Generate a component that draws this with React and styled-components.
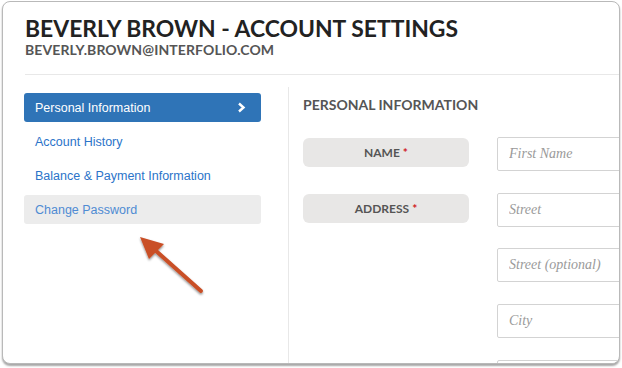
import React from 'react';
import styled, { createGlobalStyle } from 'styled-components';

const GlobalStyle = createGlobalStyle`
  html, body {
    margin: 0;
    padding: 0;
    background: #ffffff;
  }
  body {
    width: 622px;
    height: 368px;
    overflow: hidden;
    font-family: "Liberation Sans", Arial, sans-serif;
  }
`;

const navItems = [
  { label: 'Personal Information', state: 'active' },
  { label: 'Account History' },
  { label: 'Balance & Payment Information' },
  { label: 'Change Password', state: 'hover' },
];

const fields = [
  { label: 'NAME', placeholder: 'First Name' },
  { label: 'ADDRESS', placeholder: 'Street' },
  { placeholder: 'Street (optional)' },
  { placeholder: 'City' },
  { placeholder: 'State' },
];

const App = () => {
  return (
    <>
      <GlobalStyle />
      <Window>
        <Header>
          <Title>BEVERLY BROWN - ACCOUNT SETTINGS</Title>
          <Email>BEVERLY.BROWN@INTERFOLIO.COM</Email>
        </Header>
        <Body>
          <Sidebar>
            {navItems.map((item) => (
              <NavItem key={item.label} $state={item.state}>
                {item.label}
                {item.state === 'active' && (
                  <svg width="9" height="11" viewBox="0 0 9 11">
                    <path d="M2 1.5 L6.5 5.5 L2 9.5" fill="none" stroke="#fff" strokeWidth="2.4" />
                  </svg>
                )}
              </NavItem>
            ))}
          </Sidebar>
          <Main>
            <SectionTitle>PERSONAL INFORMATION</SectionTitle>
            <Form>
              {fields.map((f) => (
                <Row key={f.placeholder}>
                  {f.label ? (
                    <Label>
                      {f.label}<Req>*</Req>
                    </Label>
                  ) : (
                    <span />
                  )}
                  <Input placeholder={f.placeholder} />
                </Row>
              ))}
            </Form>
          </Main>
        </Body>
        <Pointer width="80" height="70" viewBox="0 0 80 70">
          <defs>
            <filter id="sh" x="-20%" y="-20%" width="140%" height="140%">
              <feDropShadow dx="0" dy="1.5" stdDeviation="1.2" floodColor="#000" floodOpacity="0.45" />
            </filter>
          </defs>
          <g filter="url(#sh)">
            <line x1="68" y1="61" x2="22" y2="20" stroke="#c94f27" strokeWidth="4" strokeLinecap="round" />
            <path d="M7 7 L31 14 L16 29 Z" fill="#c94f27" />
          </g>
        </Pointer>
      </Window>
    </>
  );
};

const Window = styled.div`
  position: relative;
  margin: 1px 2px 0 2px;
  height: 363px;
  box-sizing: border-box;
  border: 1px solid #b9b9b9;
  border-radius: 8px;
  overflow: hidden;
  background: #fff;
  box-shadow: 0 2px 2px rgba(0, 0, 0, 0.35);
`;

const Header = styled.div`
  margin-left: 22px;
  padding-top: 12px;
  height: 60px;
  border-bottom: 1px solid #e8e8e8;
`;

const Title = styled.h1`
  margin: 0;
  font-family: Lato, "Open Sans", sans-serif;
  font-weight: 700;
  font-size: 22.9px;
  line-height: 28px;
  color: #222;
`;

const Email = styled.div`
  font-family: Lato, "Open Sans", sans-serif;
  font-weight: 700;
  font-size: 14px;
  line-height: 16px;
  color: #555;
  letter-spacing: 0.1px;
`;

const Body = styled.div`
  display: flex;
  padding-left: 21px;
  height: 300px;
`;

const Sidebar = styled.nav`
  flex: none;
  width: 237px;
  padding-top: 18px;
  display: flex;
  flex-direction: column;
  gap: 5px;
`;

const NavItem = styled.div`
  height: 29px;
  box-sizing: border-box;
  padding: 0 15px 0 11px;
  display: flex;
  align-items: center;
  justify-content: space-between;
  border-radius: 3px;
  font-size: 12.5px;
  color: ${(p) => (p.$state === 'active' ? '#fff' : '#2b74c9')};
  background: ${(p) =>
    p.$state === 'active' ? '#2f74b7' : p.$state === 'hover' ? '#ececec' : 'transparent'};
  ${(p) => p.$state === 'hover' && 'color: #4f8bd3;'}
`;

const Main = styled.div`
  flex: none;
  margin-left: 27px;
  border-left: 1px solid #e8e8e8;
  margin-top: 12px;
  padding-left: 14px;
`;

const SectionTitle = styled.h2`
  margin: 0;
  padding-top: 10px;
  font-family: Lato, "Open Sans", sans-serif;
  font-weight: 700;
  font-size: 14px;
  line-height: 16px;
  color: #555;
`;

const Form = styled.div`
  margin-top: 24px;
  display: flex;
  flex-direction: column;
  gap: 21.7px;
`;

const Row = styled.div`
  display: grid;
  grid-template-columns: 166px 200px;
  column-gap: 28px;
  align-items: start;
`;

const Label = styled.div`
  height: 29px;
  margin-top: 1px;
  border-radius: 6px;
  background: #e8e7e6;
  display: flex;
  align-items: center;
  justify-content: center;
  font-family: Lato, "Open Sans", sans-serif;
  font-weight: 700;
  font-size: 12px;
  color: #555;
`;

const Req = styled.span`
  color: #d0191d;
  margin-left: 3px;
`;

const Input = styled.input`
  height: 34px;
  box-sizing: border-box;
  border: 1px solid #d3d3d3;
  border-radius: 2px;
  padding: 0 11px;
  font-family: "Liberation Serif", serif;
  font-style: italic;
  font-size: 14px;
  outline: none;
  &::placeholder {
    color: #9a9a9a;
  }
`;

const Pointer = styled.svg`
  position: absolute;
  left: 130px;
  top: 228px;
`;

export default App;
